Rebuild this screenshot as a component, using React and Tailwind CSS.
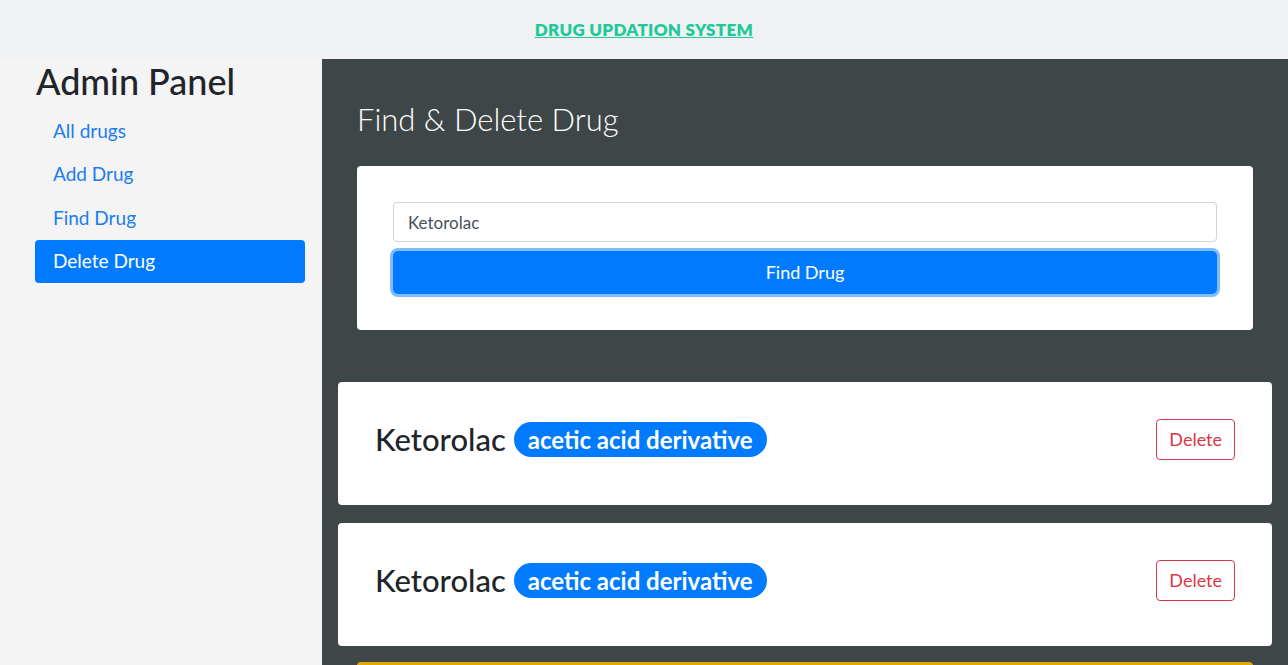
import { useState } from "react";

const drugs = [
  { id: 1, name: "Ketorolac", group: "acetic acid derivative" },
  { id: 2, name: "Ketorolac", group: "acetic acid derivative" },
];

const links = ["All drugs", "Add Drug", "Find Drug", "Delete Drug"];

export default function App() {
  const [query, setQuery] = useState("Ketorolac");
  const active = "Delete Drug";

  return (
    <div className="h-[665px] overflow-hidden bg-[#f4f4f4] font-['Lato',sans-serif]">
      <header className="h-[59px] bg-[#f0f1f3] flex items-center justify-center">
        <a
          href="#"
          className="text-[#20c997] text-[17px] font-extrabold underline tracking-[0.3px] mt-[1px]"
        >
          DRUG UPDATION SYSTEM
        </a>
      </header>

      <div className="flex">
        {/* sidebar */}
        <aside className="w-[322px] shrink-0 bg-[#f4f4f4] pl-[35px] pr-[17px]">
          <h1 className="text-[36px] leading-[44px] font-medium text-[#212529] pl-[1px] mb-[6px]">
            Admin Panel
          </h1>
          <nav className="flex flex-col">
            {links.map((l) => (
              <a
                key={l}
                href="#"
                className={
                  l === active
                    ? "h-[43px] flex items-center px-[18px] rounded-[4px] bg-[#007bff] text-white text-[19px]"
                    : "h-[43.5px] flex items-center px-[18px] text-[#1a7cf0] text-[19px]"
                }
              >
                {l}
              </a>
            ))}
          </nav>
        </aside>

        {/* main */}
        <main className="flex-1 bg-[#3f4648] h-[606px]">
          <div className="px-[35px] pt-[40px]">
            <h2 className="text-white text-[31px] font-light leading-[40px] mb-[27px]">
              Find &amp; Delete Drug
            </h2>
            <div className="bg-white rounded-[4px] px-[36px] py-[36px] flex flex-col gap-[9px]">
              <input
                value={query}
                onChange={(e) => setQuery(e.target.value)}
                className="h-[40px] border border-[#ced4da] rounded-[4px] px-[14px] text-[17px] text-[#495057] outline-none"
              />
              <button className="h-[43px] rounded-[5px] bg-[#007bff] text-white text-[18px] ring-[3px] ring-[#80bdff]">
                Find Drug
              </button>
            </div>
          </div>

          <div className="px-[16px] pt-[52px] flex flex-col gap-[18px]">
            {drugs.map((d) => (
              <div
                key={d.id}
                className="bg-white rounded-[4px] h-[123px] flex items-center justify-between pl-[37px] pr-[37px] pb-[8px]"
              >
                <div className="flex items-center gap-[8px]">
                  <span className="text-[31px] text-[#212529] font-medium leading-none">
                    {d.name}
                  </span>
                  <span className="bg-[#007bff] text-white text-[24px] font-bold rounded-full px-[14px] h-[35px] flex items-center">
                    {d.group}
                  </span>
                </div>
                <button className="h-[41px] px-[12px] border border-[#dc3545] rounded-[4px] text-[#dc3545] text-[18px]">
                  Delete
                </button>
              </div>
            ))}
            <div className="mx-[19px] -mt-[2px] h-[40px] bg-[#fff3cd] border-t-[3px] border-[#e0a800] rounded-t-[4px]" />
          </div>
        </main>
      </div>
    </div>
  );
}
